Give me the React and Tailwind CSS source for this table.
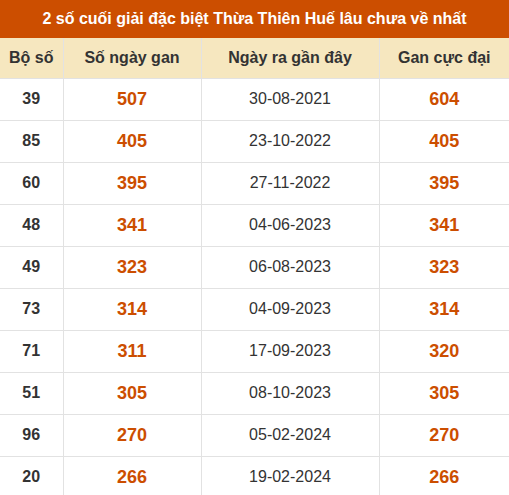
import React from "react";

const rows = [
  ["39", "507", "30-08-2021", "604"],
  ["85", "405", "23-10-2022", "405"],
  ["60", "395", "27-11-2022", "395"],
  ["48", "341", "04-06-2023", "341"],
  ["49", "323", "06-08-2023", "323"],
  ["73", "314", "04-09-2023", "314"],
  ["71", "311", "17-09-2023", "320"],
  ["51", "305", "08-10-2023", "305"],
  ["96", "270", "05-02-2024", "270"],
  ["20", "266", "19-02-2024", "266"],
];

export default function App() {
  return (
    <div className="w-[509px] bg-white" style={{ fontFamily: '"Liberation Sans", Arial, sans-serif' }}>
      <div className="h-[38px] bg-[#cc4e00] text-white font-bold text-[16px] flex items-center justify-center">
        2 số cuối giải đặc biệt Thừa Thiên Huế lâu chưa về nhất
      </div>
      <table className="w-[509px] border-collapse table-fixed">
        <colgroup>
          <col className="w-[63px]" />
          <col className="w-[138px]" />
          <col className="w-[178px]" />
          <col className="w-[130px]" />
        </colgroup>
        <thead>
          <tr className="h-[40px] bg-[#f6e7bf] text-[#333] text-[16px] font-bold">
            <th className="border-b border-r border-[#e2e2e2] font-bold">Bộ số</th>
            <th className="border-b border-r border-[#e2e2e2] font-bold">Số ngày gan</th>
            <th className="border-b border-r border-[#e2e2e2] font-bold">Ngày ra gần đây</th>
            <th className="border-b border-[#e2e2e2] font-bold">Gan cực đại</th>
          </tr>
        </thead>
        <tbody>
          {rows.map((r, i) => (
            <tr key={i} className="h-[42px] text-center">
              <td className="border-b border-r border-[#e2e2e2] text-[16px] font-bold text-[#333]">{r[0]}</td>
              <td className="border-b border-r border-[#e2e2e2] text-[18px] font-bold text-[#cc4e00]">{r[1]}</td>
              <td className="border-b border-r border-[#e2e2e2] text-[16px] text-[#333]">{r[2]}</td>
              <td className="border-b border-[#e2e2e2] text-[18px] font-bold text-[#cc4e00]">{r[3]}</td>
            </tr>
          ))}
        </tbody>
      </table>
    </div>
  );
}
